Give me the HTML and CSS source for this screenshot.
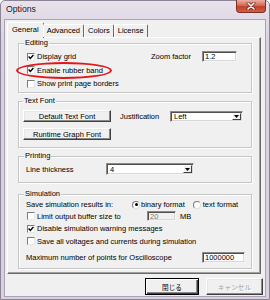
FILE: index.html
```html
<!DOCTYPE html>
<html>
<head>
<meta charset="utf-8">
<link rel="stylesheet" href="styles.css">
</head>
<body>
<div class="window">
  <div class="titlebar">
    <span class="title">Options</span>
    <div class="close">
      <svg width="10" height="8" viewBox="0 0 10 8"><path d="M2 1 L8 7 M8 1 L2 7" stroke="#6b2018" stroke-width="3" stroke-linecap="round"/><path d="M2 1 L8 7 M8 1 L2 7" stroke="#fff" stroke-width="1.6" stroke-linecap="round"/></svg>
    </div>
  </div>
  <div class="client">
    <div class="tabs">
      <div class="tab active">General</div>
      <div class="tab">Advanced</div>
      <div class="tab">Colors</div>
      <div class="tab">License</div>
    </div>
    <div class="panel">
      <div class="group g-edit">
        <div class="legend">Editing</div>
        <div class="rows">
          <div class="row">
            <span class="cb"><svg width="6" height="6" viewBox="0 0 6 6"><path d="M0.6 2.6 L2.3 4.4 L5.4 1" fill="none" stroke="#000" stroke-width="1.4"/></svg></span>
            <span>Display grid</span>
            <span class="zoom-label">Zoom factor</span>
            <span class="edit zoom-input">1.2</span>
          </div>
          <div class="row">
            <span class="cb"><svg width="6" height="6" viewBox="0 0 6 6"><path d="M0.6 2.6 L2.3 4.4 L5.4 1" fill="none" stroke="#000" stroke-width="1.4"/></svg></span>
            <span>Enable rubber band</span>
          </div>
          <div class="row">
            <span class="cb"></span>
            <span>Show print page borders</span>
          </div>
        </div>
      </div>

      <div class="group g-font">
        <div class="legend">Text Font</div>
        <div class="font-row">
          <div class="btn font-btn">Default Text Font</div>
          <span class="just-label">Justification</span>
          <div class="combo just-combo"><span class="combo-text">Left</span><span class="arrow"><svg width="5" height="3" viewBox="0 0 5 3"><path d="M0 0 H5 L2.5 3 Z" fill="#000"/></svg></span></div>
        </div>
        <div class="font-row second">
          <div class="btn font-btn">Runtime Graph Font</div>
        </div>
      </div>

      <div class="group g-print">
        <div class="legend">Printing</div>
        <div class="print-row">
          <span class="thick-label">Line thickness</span>
          <div class="combo thick-combo"><span class="combo-text">4</span><span class="arrow"><svg width="5" height="3" viewBox="0 0 5 3"><path d="M0 0 H5 L2.5 3 Z" fill="#000"/></svg></span></div>
        </div>
      </div>

      <div class="group g-sim">
        <div class="legend">Simulation</div>
        <div class="row sim-first">
          <span class="save-label">Save simulation results in:</span>
          <span class="radio on"></span><span>binary format</span>
          <span class="radio second-radio"></span><span>text format</span>
        </div>
        <div class="row sim-row">
          <span class="cb"></span>
          <span class="limit-label">Limit output buffer size to</span>
          <span class="edit disabled buf-input">20</span>
          <span class="mb">MB</span>
        </div>
        <div class="row sim-row">
          <span class="cb"><svg width="6" height="6" viewBox="0 0 6 6"><path d="M0.6 2.6 L2.3 4.4 L5.4 1" fill="none" stroke="#000" stroke-width="1.4"/></svg></span>
          <span>Disable simulation warning messages</span>
        </div>
        <div class="row sim-row">
          <span class="cb"></span>
          <span>Save all voltages and currents during simulation</span>
        </div>
        <div class="row sim-last">
          <span class="max-label">Maximum number of points for Oscilloscope</span>
          <span class="edit max-input">1000000</span>
        </div>
      </div>
    </div>
    <div class="actions">
      <div class="btn action default">閉じる</div>
      <div class="btn action cancel">キャンセル</div>
    </div>
  </div>
  <div class="mark"></div>
</div>
</body>
</html>
```

FILE: styles.css
```css
* { box-sizing: border-box; }
html, body { margin: 0; padding: 0; }
body {
  width: 270px;
  height: 300px;
  overflow: hidden;
  font-family: "Liberation Sans", Arial, sans-serif;
  font-size: 7.5px;
  color: #000;
  background: #fff;
}
.window {
  position: relative;
  width: 270px;
  height: 300px;
  border: 1px solid #8a8494;
  border-radius: 5px 5px 0 0;
  background: linear-gradient(#e8e2ec, #dad2e1 40px, #d8d0df);
  display: flex;
  flex-direction: column;
}
.titlebar {
  height: 18px;
  flex: none;
  display: flex;
  justify-content: space-between;
  align-items: flex-start;
  padding: 0 3px 0 5px;
}
.title {
  font-size: 8.7px;
  line-height: 17px;
  color: #1a1a1a;
}
.close {
  width: 30px;
  height: 13px;
  margin-top: -1px;
  border: 1px solid #7a3026;
  border-top: none;
  border-radius: 0 0 4px 4px;
  background: linear-gradient(#eab0a2, #d86a55 45%, #c2412e 55%, #d0603f);
  display: flex;
  align-items: center;
  justify-content: center;
}
.client {
  margin: 0 3px;
  height: 278px;
  flex: none;
  border: 1px solid #aaa2b4;
  background: #f0f0f0;
  padding: 2px 0 0 2px;
  display: flex;
  flex-direction: column;
}
.tabs {
  display: flex;
  height: 15px;
  padding-left: 2px;
  position: relative;
  z-index: 1;
  flex: none;
}
.tab {
  height: 13px;
  margin-top: 2px;
  padding: 0 3px;
  border: 1px solid;
  border-color: #fff #696969 transparent #fff;
  border-bottom: none;
  border-radius: 2px 2px 0 0;
  line-height: 11px;
  background: #f0f0f0;
}
.tab.active {
  height: 16px;
  margin: 0 -1px -1px -2px;
  padding: 0 4px;
  line-height: 14px;
}
.panel {
  width: 254px;
  height: 237px;
  flex: none;
  border: 1px solid;
  border-color: #fff #696969 #696969 #fff;
  box-shadow: inset -1px -1px 0 #a0a0a0;
  padding: 0 8px 0 10px;
  display: flex;
  flex-direction: column;
}
.group {
  border: 1px solid #c6c6c6;
  box-shadow: 1px 1px 0 #fff, inset 1px 1px 0 #fff;
  display: flex;
  flex-direction: column;
  flex: none;
}
.legend {
  align-self: flex-start;
  height: 10px;
  line-height: 10px;
  margin-top: -6px;
  padding: 0 1px;
  background: #f0f0f0;
}
.row {
  display: flex;
  align-items: center;
  height: 13.5px;
  white-space: nowrap;
}
.cb {
  width: 8px;
  height: 8px;
  margin: 0 2px 0 1px;
  flex: none;
  background: #fff;
  border: 1px solid;
  border-color: #7c7c7c #e8e8e8 #e8e8e8 #7c7c7c;
  display: flex;
  align-items: center;
  justify-content: center;
}
.edit {
  background: #fff;
  border: 1px solid;
  border-color: #8a8a8a #f4f4f4 #f4f4f4 #8a8a8a;
  box-shadow: inset 1px 1px 0 #505050, inset -1px -1px 0 #d8d8d8;
  padding-left: 2px;
  flex: none;
  display: flex;
  align-items: center;
}
.edit.disabled {
  background: #f0f0f0;
  color: #7a7a7a;
}

/* Editing */
.g-edit {
  margin-top: 5px;
  height: 50px;
  padding: 0 14px 0 7px;
}
.g-edit .legend { margin-left: -2px; }
.rows { margin-top: 2px; }
.zoom-label { margin-left: auto; }
.zoom-input {
  width: 35px;
  height: 11px;
  margin-left: 11px;
}

/* Text font */
.g-font {
  margin-top: 8px;
  height: 47px;
  padding-left: 4px;
}
.font-row {
  display: flex;
  align-items: center;
  margin-top: 4px;
  height: 12px;
}
.font-row.second { margin-top: 6px; }
.btn {
  background: #f0f0f0;
  border: 1px solid;
  border-color: #fff #404040 #404040 #fff;
  box-shadow: inset -1px -1px 0 #8a8a8a, inset 1px 1px 0 #e6e6e6;
  display: flex;
  align-items: center;
  justify-content: center;
  white-space: nowrap;
}
.font-btn {
  width: 88px;
  height: 12px;
}
.just-label { margin-left: 9px; width: 50px; }
.combo {
  display: flex;
  align-items: center;
  background: #fff;
  border: 1px solid;
  border-color: #8a8a8a #f4f4f4 #f4f4f4 #8a8a8a;
  box-shadow: inset 1px 1px 0 #505050, inset -1px -1px 0 #d8d8d8;
  padding: 1px;
}
.combo-text { flex: 1; padding-left: 2px; }
.arrow {
  width: 9px;
  height: 100%;
  background: #f0f0f0;
  border: 1px solid;
  border-color: #fff #404040 #404040 #fff;
  display: flex;
  align-items: center;
  justify-content: center;
}
.just-combo { width: 73px; height: 11px; }

/* Printing */
.g-print {
  margin-top: 8px;
  height: 27px;
  padding-left: 7px;
}
.g-print .legend { margin-left: -2px; }
.print-row {
  display: flex;
  align-items: center;
  margin-top: 2px;
  height: 12px;
}
.thick-label { width: 80px; }
.thick-combo { width: 88px; height: 12px; }

/* Simulation */
.g-sim {
  margin-top: 11px;
  height: 75px;
  padding-left: 7px;
}
.g-sim .legend { margin-left: -2px; }
.sim-first { height: 11px; }
.sim-row { height: 12.5px; }
.sim-last { height: 12px; margin-top: 4px; }
.save-label { width: 106px; }
.radio {
  width: 8px;
  height: 8px;
  margin-right: 1px;
  border-radius: 50%;
  background: #fff;
  border: 1px solid;
  border-color: #7c7c7c #e0e0e0 #e0e0e0 #7c7c7c;
  display: flex;
  align-items: center;
  justify-content: center;
  flex: none;
}
.radio.on::after {
  content: "";
  width: 3px;
  height: 3px;
  border-radius: 50%;
  background: #000;
}
.second-radio { margin-left: 8px; margin-right: 2px; }
.limit-label { width: 110px; }
.buf-input { width: 29px; height: 10px; }
.mb { margin-left: 4px; }
.max-label { width: 176px; }
.max-input { width: 43px; height: 11px; }

/* Action buttons */
.actions {
  display: flex;
  justify-content: flex-end;
  gap: 7px;
  margin-top: 4px;
  padding-right: 2px;
}
.action {
  height: 17px;
  font-family: "Noto Sans CJK JP", "Liberation Sans", sans-serif;
  font-size: 6.6px;
}
.action.default {
  width: 54px;
  border-color: #000;
  box-shadow: inset 1px 1px 0 #fff, inset -1px -1px 0 #404040, inset -2px -2px 0 #8a8a8a;
}
.action.cancel {
  width: 57px;
  color: #a0a0a0;
  text-shadow: 1px 1px 0 #fff;
}

.mark {
  position: absolute;
  left: 15px;
  top: 61px;
  width: 96px;
  height: 17px;
  border: 2px solid #e4161c;
  border-radius: 50%;
}
```
